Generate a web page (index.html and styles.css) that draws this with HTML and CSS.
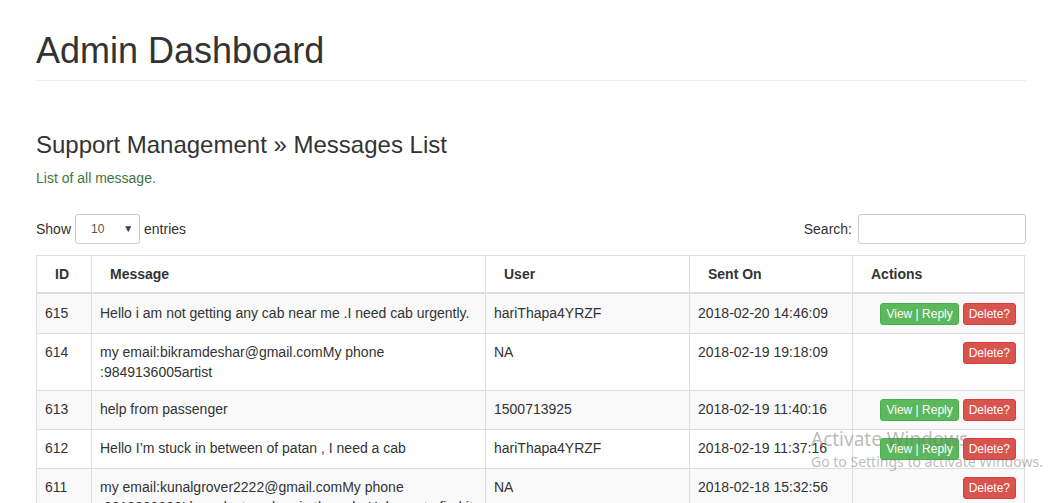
FILE: index.html
```html
<!DOCTYPE html>
<html lang="en">
<head>
<meta charset="utf-8">
<title>Admin Dashboard</title>
<link rel="stylesheet" href="styles.css">
</head>
<body>
<div class="container">
  <div class="page-header">
    <h1>Admin Dashboard</h1>
  </div>
  <h3 class="section-title">Support Management » Messages List</h3>
  <p class="text-success">List of all message.</p>

  <div class="dt-controls">
    <div class="dt-length">
      <span>Show</span>
      <div class="fake-select"><span>10</span><span class="caret">▼</span></div>
      <span>entries</span>
    </div>
    <div class="dt-filter">
      <span>Search:</span>
      <div class="search-input"></div>
    </div>
  </div>

  <table class="table">
    <colgroup>
      <col class="c-id"><col class="c-msg"><col class="c-user"><col class="c-sent"><col class="c-act">
    </colgroup>
    <thead>
      <tr><th>ID</th><th>Message</th><th>User</th><th>Sent On</th><th>Actions</th></tr>
    </thead>
    <tbody>
      <tr>
        <td>615</td>
        <td>Hello i am not getting any cab near me .I need cab urgently.</td>
        <td>hariThapa4YRZF</td>
        <td>2018-02-20 14:46:09</td>
        <td class="actions"><a class="btn btn-success">View | Reply</a> <a class="btn btn-danger">Delete?</a></td>
      </tr>
      <tr>
        <td>614</td>
        <td>my email:bikramdeshar@gmail.comMy phone :9849136005artist</td>
        <td>NA</td>
        <td>2018-02-19 19:18:09</td>
        <td class="actions"><a class="btn btn-danger">Delete?</a></td>
      </tr>
      <tr>
        <td>613</td>
        <td>help from passenger</td>
        <td>1500713925</td>
        <td>2018-02-19 11:40:16</td>
        <td class="actions"><a class="btn btn-success">View | Reply</a> <a class="btn btn-danger">Delete?</a></td>
      </tr>
      <tr>
        <td>612</td>
        <td>Hello I’m stuck in between of patan , I need a cab</td>
        <td>hariThapa4YRZF</td>
        <td>2018-02-19 11:37:16</td>
        <td class="actions"><a class="btn btn-success">View | Reply</a> <a class="btn btn-danger">Delete?</a></td>
      </tr>
      <tr>
        <td>611</td>
        <td>my email:kunalgrover2222@gmail.comMy phone :9810000000I have lost my bag in the cab. Help me to find it</td>
        <td>NA</td>
        <td>2018-02-18 15:32:56</td>
        <td class="actions"><a class="btn btn-danger">Delete?</a></td>
      </tr>
    </tbody>
  </table>
</div>

<div class="watermark">
  <div class="wm-title">Activate Windows</div>
  <div class="wm-sub">Go to Settings to activate Windows.</div>
</div>
</body>
</html>
```

FILE: styles.css
```css
* { box-sizing: border-box; }

html, body {
  margin: 0;
  padding: 0;
  background: #fff;
}

body {
  font-family: "Liberation Sans", Arial, sans-serif;
  font-size: 14px;
  line-height: 20px;
  color: #333;
  overflow: hidden;
  height: 503px;
}

.container {
  width: 991px;
  margin-left: 35px;
}

.page-header {
  padding-top: 31px;
  padding-bottom: 9px;
  border-bottom: 1px solid #eee;
}

.page-header h1 {
  margin: 0;
  padding-left: 1px;
  font-size: 36px;
  font-weight: 500;
  line-height: 40px;
}

.section-title {
  margin: 51px 0 0 1px;
  font-size: 24px;
  font-weight: 500;
  line-height: 26px;
}

.text-success {
  margin: 10px 0 0 1px;
  color: #3c763d;
}

.dt-controls {
  display: flex;
  justify-content: space-between;
  align-items: center;
  margin-top: 26px;
  padding-left: 1px;
}

.dt-length, .dt-filter {
  display: flex;
  align-items: center;
}

.fake-select {
  display: flex;
  align-items: center;
  justify-content: space-between;
  width: 65px;
  height: 30px;
  margin: 0 4px 0 4px;
  padding: 0 6px 0 15px;
  border: 1px solid #ccc;
  border-radius: 3px;
  font-size: 12px;
  color: #555;
}

.fake-select .caret {
  font-size: 10px;
  color: #444;
}

.search-input {
  width: 168px;
  height: 30px;
  margin-left: 6px;
  border: 1px solid #ccc;
  border-radius: 3px;
}

.table {
  width: 988px;
  margin-top: 11px;
  margin-left: 1px;
  border-collapse: collapse;
  table-layout: fixed;
  border: 1px solid #ddd;
}

.c-id { width: 55px; }
.c-msg { width: 394px; }
.c-user { width: 204px; }
.c-sent { width: 163px; }
.c-act { width: 172px; }

.table th, .table td {
  border: 1px solid #ddd;
  padding: 8px;
  vertical-align: top;
  text-align: left;
}

.table th {
  padding-left: 18px;
  font-weight: bold;
  border-bottom: 2px solid #ddd;
}

.table tbody tr:nth-child(odd) {
  background: #f9f9f9;
}

.table td.actions {
  text-align: right;
  padding-top: 8px;
  padding-bottom: 8px;
}

.table tbody tr:first-child td {
  padding-top: 9px;
}

.btn {
  display: inline-block;
  height: 22px;
  padding: 1px 5px;
  font-size: 12px;
  line-height: 18px;
  border: 1px solid transparent;
  border-radius: 3px;
  color: #fff;
  white-space: nowrap;
  vertical-align: top;
}

.btn-success {
  background: #5cb85c;
  border-color: #4cae4c;
}

.btn-danger {
  background: #d9534f;
  border-color: #d43f3a;
}

.watermark {
  position: absolute;
  left: 811px;
  top: 427px;
  color: rgba(120, 120, 120, 0.5);
  font-family: "Noto Sans", "Open Sans", sans-serif;
  white-space: nowrap;
  pointer-events: none;
}

.wm-title {
  font-size: 19px;
  line-height: 25px;
}

.wm-sub {
  font-size: 14px;
  line-height: 20px;
}
```
